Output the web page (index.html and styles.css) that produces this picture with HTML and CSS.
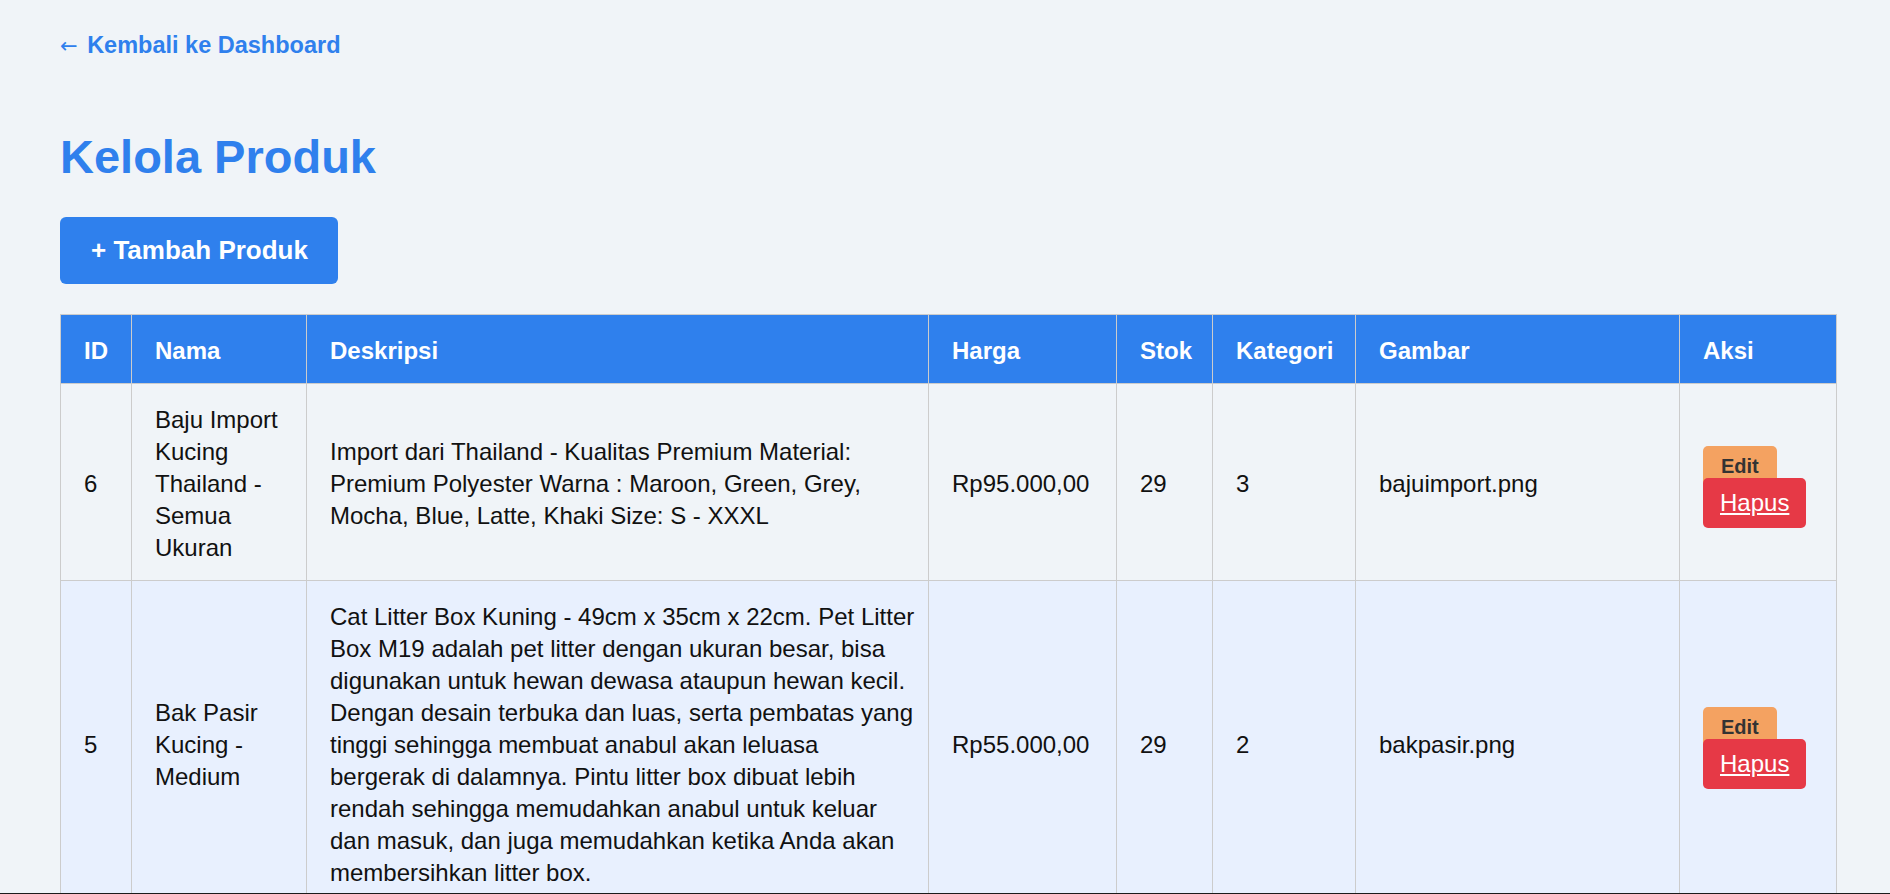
FILE: index.html
```html
<!DOCTYPE html>
<html lang="id">
<head>
<meta charset="utf-8">
<title>Kelola Produk</title>
<link rel="stylesheet" href="styles.css">
</head>
<body>
<div class="page">
  <a class="back-link" href="#"><span class="arrow">←</span> Kembali ke Dashboard</a>
  <h1 class="title">Kelola Produk</h1>
  <a class="btn-add" href="#">+ Tambah Produk</a>
  <table class="product-table">
    <colgroup>
      <col class="c-id">
      <col class="c-nama">
      <col class="c-desc">
      <col class="c-harga">
      <col class="c-stok">
      <col class="c-kat">
      <col class="c-gambar">
      <col class="c-aksi">
    </colgroup>
    <thead>
      <tr>
        <th>ID</th>
        <th>Nama</th>
        <th class="desc">Deskripsi</th>
        <th>Harga</th>
        <th>Stok</th>
        <th>Kategori</th>
        <th>Gambar</th>
        <th>Aksi</th>
      </tr>
    </thead>
    <tbody>
      <tr>
        <td>6</td>
        <td>Baju Import Kucing Thailand - Semua Ukuran</td>
        <td class="desc">Import dari Thailand - Kualitas Premium Material: Premium Polyester Warna : Maroon, Green, Grey, Mocha, Blue, Latte, Khaki Size: S - XXXL</td>
        <td>Rp95.000,00</td>
        <td>29</td>
        <td>3</td>
        <td>bajuimport.png</td>
        <td>
          <div class="actions">
            <a class="btn-edit" href="#">Edit</a>
            <a class="btn-hapus" href="#">Hapus</a>
          </div>
        </td>
      </tr>
      <tr>
        <td>5</td>
        <td>Bak Pasir Kucing - Medium</td>
        <td class="desc">Cat Litter Box Kuning - 49cm x 35cm x 22cm. Pet Litter Box M19 adalah pet litter dengan ukuran besar, bisa digunakan untuk hewan dewasa ataupun hewan kecil. Dengan desain terbuka dan luas, serta pembatas yang tinggi sehingga membuat anabul akan leluasa bergerak di dalamnya. Pintu litter box dibuat lebih rendah sehingga memudahkan anabul untuk keluar dan masuk, dan juga memudahkan ketika Anda akan membersihkan litter box.</td>
        <td>Rp55.000,00</td>
        <td>29</td>
        <td>2</td>
        <td>bakpasir.png</td>
        <td>
          <div class="actions">
            <a class="btn-edit" href="#">Edit</a>
            <a class="btn-hapus" href="#">Hapus</a>
          </div>
        </td>
      </tr>
    </tbody>
  </table>
</div>
<div class="window-edge"></div>
</body>
</html>
```

FILE: styles.css
```css
html, body {
  margin: 0;
  padding: 0;
}

body {
  background: #f0f4f8;
  font-family: "Liberation Sans", Arial, sans-serif;
  color: #111;
}

.page {
  display: flex;
  flex-direction: column;
  align-items: flex-start;
  padding: 29px 54px 40px 60px;
}

.back-link {
  display: block;
  height: 32px;
  font-size: 23.5px;
  line-height: 32px;
  font-weight: bold;
  color: #2f80ed;
  text-decoration: none;
}

.back-link .arrow {
  display: inline-block;
  margin-right: 3px;
  font-family: "DejaVu Sans", sans-serif;
  font-weight: normal;
  font-size: 21px;
  line-height: 1;
}

.title {
  margin: 67px 0 0;
  font-size: 47px;
  line-height: 58px;
  font-weight: bold;
  color: #2f80ed;
}

.btn-add {
  margin-top: 31px;
  background: #2f80ed;
  color: #fff;
  font-size: 26px;
  line-height: 31px;
  font-weight: bold;
  padding: 18px 30px 18px 31px;
  border-radius: 6px;
  text-decoration: none;
}

.product-table {
  margin-top: 30px;
  width: 1777px;
  border-collapse: collapse;
  table-layout: fixed;
}

.c-id { width: 71px; }
.c-nama { width: 175px; }
.c-desc { width: 622px; }
.c-harga { width: 188px; }
.c-stok { width: 96px; }
.c-kat { width: 143px; }
.c-gambar { width: 324px; }
.c-aksi { width: 157px; }

.product-table th,
.product-table td {
  border: 1px solid #cccccc;
  padding: 20px 24px 16px 23px;
  text-align: left;
  vertical-align: middle;
  font-size: 24px;
  line-height: 32px;
}

.product-table th {
  background: #2f80ed;
  color: #fff;
  font-weight: bold;
  white-space: nowrap;
}

.product-table td.desc {
  padding-right: 10px;
}

.product-table tbody tr:nth-child(even) {
  background: #e8f0fe;
}

.actions {
  display: flex;
  flex-direction: column;
  align-items: flex-start;
  padding-top: 6px;
}

.btn-edit {
  background: #f4a261;
  color: #333;
  font-size: 20px;
  line-height: 40px;
  font-weight: bold;
  padding: 0 18px;
  border-radius: 5px;
  text-decoration: none;
}

.btn-hapus {
  margin-top: -8px;
  background: #e63946;
  color: #fff;
  font-size: 24px;
  line-height: 32px;
  padding: 9px 17px;
  border-radius: 5px;
  text-decoration: underline;
}

.window-edge {
  position: fixed;
  left: 0;
  right: 0;
  bottom: 0;
  height: 1px;
  background: #1b1b1b;
}
```
